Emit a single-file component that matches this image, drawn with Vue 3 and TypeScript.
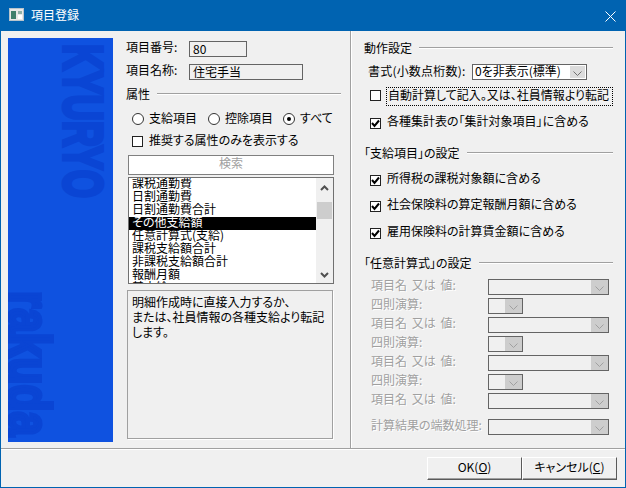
<script setup lang="ts">
const listItems: string[] = [
  '課税通勤費',
  '日割通勤費',
  '日割通勤費合計',
  'その他支給額',
  '任意計算式(支給)',
  '課税支給額合計',
  '非課税支給額合計',
  '報酬月額',
  '基本給',
]
const selectedItem = 3

const payChecks: string[] = [
  '所得税の課税対象額に含める',
  '社会保険料の算定報酬月額に含める',
  '雇用保険料の計算賃金額に含める',
]

const calcRows = [
  { label: '項目名 又は 値:', small: false },
  { label: '四則演算:', small: true },
  { label: '項目名 又は 値:', small: false },
  { label: '四則演算:', small: true },
  { label: '項目名 又は 値:', small: false },
  { label: '四則演算:', small: true },
  { label: '項目名 又は 値:', small: false },
]
</script>

<template>
  <div class="window">
    <div class="titlebar">
      <svg class="appIcon" width="16" height="14" viewBox="0 0 16 14">
        <rect x="0.5" y="0.5" width="14" height="12" fill="#e8e8e8" stroke="#b8c4cc" />
        <rect x="2" y="3" width="5" height="8" fill="#3f7f6c" />
        <rect x="9" y="3" width="4" height="3" fill="#8fb0a8" />
        <rect x="9" y="7" width="4" height="4" fill="#ffffff" />
      </svg>
      <span class="titleText">項目登録</span>
      <svg class="closeIcon" width="11" height="11" viewBox="0 0 11 11">
        <path d="M0.5 0.5L10.5 10.5M10.5 0.5L0.5 10.5" stroke="#fff" stroke-width="1" fill="none" />
      </svg>
    </div>

    <div class="content">
      <div class="leftPane">
        <div class="bluePanel">
          <svg width="105" height="404" viewBox="0 0 105 404">
            <text class="logoText" transform="translate(56,6) rotate(90)" font-size="56" textLength="154" lengthAdjust="spacingAndGlyphs">KYURYO</text>
            <text class="logoText" transform="translate(1,253) rotate(90)" font-size="60" textLength="145" lengthAdjust="spacingAndGlyphs">rakuda</text>
          </svg>
        </div>

        <div class="middle">
          <div class="fieldRow first">
            <span class="fieldLabel">項目番号:</span>
            <span class="field numberField">80</span>
          </div>
          <div class="fieldRow second">
            <span class="fieldLabel">項目名称:</span>
            <span class="field nameField">住宅手当</span>
          </div>

          <div class="legend attrLegend"><span>属性</span><i></i></div>

          <div class="radioRow">
            <label class="radioItem"><span class="radio"></span><span class="raised">支給項目</span></label>
            <label class="radioItem"><span class="radio"></span><span class="raised">控除項目</span></label>
            <label class="radioItem"><span class="radio on"></span><span class="raised">すべて</span></label>
          </div>
          <div class="recommendRow">
            <span class="check"></span><span class="raised">推奨する属性のみを表示する</span>
          </div>

          <div class="searchBtn">検索</div>

          <div class="listBox">
            <div class="listRows">
              <div v-for="(item, i) in listItems" :key="item" class="listRow" :class="{ selected: i === selectedItem }">{{ item }}</div>
            </div>
            <div class="scrollbar">
              <svg class="arrowUp" width="9" height="6" viewBox="0 0 9 6"><path d="M1 5L4.5 1.5L8 5" stroke="#505050" stroke-width="2" fill="none" /></svg>
              <div class="thumb"></div>
              <svg class="arrowDown" width="9" height="6" viewBox="0 0 9 6"><path d="M1 1L4.5 4.5L8 1" stroke="#505050" stroke-width="2" fill="none" /></svg>
            </div>
          </div>

          <div class="description">
            明細作成時に直接入力するか、<br />
            または、社員情報の各種支給より転記<br />
            します。
          </div>
        </div>
      </div>

      <div class="rightPane">
        <div class="legend"><span>動作設定</span><i></i></div>

        <div class="formatRow">
          <span class="formatLabel">書式(小数点桁数):</span>
          <div class="combo formatCombo">
            <span class="comboValue">0を非表示(標準)</span>
            <span class="comboBtn active">
              <svg width="9" height="5" viewBox="0 0 9 5"><path d="M0.5 0.5L4.5 4.5L8.5 0.5" stroke="#707070" fill="none" /></svg>
            </span>
          </div>
        </div>

        <div class="checkRow autoRow">
          <span class="check"></span>
          <span class="focusLabel">自動計算して記入。又は、社員情報より転記</span>
        </div>
        <div class="checkRow summaryRow">
          <span class="check">
            <svg width="9" height="9" viewBox="0 0 9 9"><path d="M1 4L3.5 7L8 1.5" stroke="#000" stroke-width="2" fill="none" /></svg>
          </span>
          <span class="checkText">各種集計表の「集計対象項目」に含める</span>
        </div>

        <div class="legend payLegend"><span>「支給項目」の設定</span><i></i></div>

        <div v-for="(text, i) in payChecks" :key="text" class="checkRow" :class="'pay' + i">
          <span class="check">
            <svg width="9" height="9" viewBox="0 0 9 9"><path d="M1 4L3.5 7L8 1.5" stroke="#000" stroke-width="2" fill="none" /></svg>
          </span>
          <span class="checkText">{{ text }}</span>
        </div>

        <div class="legend calcLegend"><span>「任意計算式」の設定</span><i></i></div>

        <div class="calcRows">
          <div v-for="(row, i) in calcRows" :key="i" class="calcRow">
            <span class="calcLabel">{{ row.label }}</span>
            <div class="combo disabled" :class="row.small ? 'opCombo' : 'valueCombo'">
              <span class="comboValue"></span>
              <span class="comboBtn">
                <svg width="9" height="5" viewBox="0 0 9 5"><path d="M0.5 0.5L4.5 4.5L8.5 0.5" stroke="#a0a0a0" fill="none" /></svg>
              </span>
            </div>
          </div>
        </div>
        <div class="calcRow roundRow">
          <span class="calcLabel">計算結果の端数処理:</span>
          <div class="combo disabled valueCombo">
            <span class="comboValue"></span>
            <span class="comboBtn">
              <svg width="9" height="5" viewBox="0 0 9 5"><path d="M0.5 0.5L4.5 4.5L8.5 0.5" stroke="#a0a0a0" fill="none" /></svg>
            </span>
          </div>
        </div>
      </div>
    </div>

    <div class="footer">
      <button class="dlgBtn">OK(<u>O</u>)</button>
      <button class="dlgBtn">キャンセル(<u>C</u>)</button>
    </div>
  </div>
</template>

<style scoped>
.window {
  width: 626px;
  height: 488px;
  box-sizing: border-box;
  border: 1px solid #0063b1;
  background: #f0f0f0;
  display: flex;
  flex-direction: column;
  font-family: "Noto Sans CJK JP", "Liberation Sans", sans-serif;
  font-size: 12px;
  line-height: 14px;
  color: #000;
  font-feature-settings: "palt";
  overflow: hidden;
}

.titlebar {
  height: 30px;
  flex: none;
  background: #0063b1;
  display: flex;
  align-items: center;
  color: #fff;
}

.appIcon {
  margin-left: 8px;
  margin-bottom: 2px;
}

.titleText {
  margin-left: 6px;
  padding-bottom: 2px;
}

.closeIcon {
  margin-left: auto;
  margin-right: 9px;
}

.content {
  height: 417px;
  flex: none;
  display: flex;
}

.leftPane {
  width: 349px;
  flex: none;
  display: flex;
  padding: 7px 0 0 7px;
  box-sizing: border-box;
}

.bluePanel {
  width: 105px;
  height: 404px;
  flex: none;
  background: #0f52e0;
  overflow: hidden;
  margin-right: 13px;
}

.bluePanel svg {
  display: block;
}

.logoText {
  font-family: "Liberation Sans", sans-serif;
  font-weight: 700;
  fill: #0a45d4;
  stroke: #0a45d4;
  stroke-width: 4;
}

.middle {
  width: 215px;
  display: flex;
  flex-direction: column;
}

.fieldRow {
  display: flex;
  height: 16px;
  align-items: center;
}

.fieldRow.first {
  margin-top: 3px;
}

.fieldRow.second {
  margin-top: 7px;
}

.fieldLabel {
  width: 63px;
  flex: none;
  padding-bottom: 4px;
}

.field {
  height: 16px;
  box-sizing: border-box;
  border: 1px solid #646464;
  padding-left: 3px;
  line-height: 13px;
}

.numberField {
  width: 58px;
}

.nameField {
  width: 114px;
}

.legend {
  height: 14px;
  display: flex;
  align-items: center;
  flex: none;
}

.legend i {
  flex: 1;
  height: 1px;
  margin-left: 7px;
  background: #a0a0a0;
  border-bottom: 1px solid #fff;
}

.attrLegend {
  margin-top: 7px;
}

.radioRow {
  display: flex;
  margin-top: 11px;
  padding-left: 6px;
  height: 14px;
  align-items: center;
}

.radioItem {
  width: 76px;
  flex: none;
  display: flex;
  align-items: center;
}

.radioItem:nth-child(2) {
  width: 75px;
}

.raised {
  padding-bottom: 2px;
}

.radio {
  width: 12px;
  height: 12px;
  box-sizing: border-box;
  border: 1px solid #333;
  border-radius: 50%;
  background: #fff;
  margin-right: 5px;
  flex: none;
  position: relative;
}

.radio.on::after {
  content: "";
  position: absolute;
  left: 3px;
  top: 3px;
  width: 4px;
  height: 4px;
  border-radius: 50%;
  background: #000;
}

.recommendRow {
  display: flex;
  align-items: center;
  margin-top: 8px;
  padding-left: 6px;
  height: 14px;
}

.recommendRow .check {
  margin-right: 6px;
}

.check {
  width: 11px;
  height: 11px;
  box-sizing: border-box;
  border: 1px solid #222;
  background: #fff;
  flex: none;
  display: flex;
  align-items: center;
  justify-content: center;
}

.searchBtn {
  margin-top: 7px;
  margin-left: 2px;
  width: 206px;
  height: 20px;
  box-sizing: border-box;
  border: 1px solid #808080;
  background: #fff;
  color: #a0a0a0;
  text-align: center;
  line-height: 13px;
}

.listBox {
  margin-top: 2px;
  margin-left: 2px;
  width: 206px;
  height: 107px;
  box-sizing: border-box;
  border: 1px solid #707070;
  background: #fff;
  display: flex;
  overflow: hidden;
}

.listRows {
  flex: 1;
  overflow: hidden;
}

.listRow {
  height: 13px;
  line-height: 9px;
  padding-left: 3px;
  white-space: nowrap;
}

.listRow.selected {
  background: #000;
  color: #fff;
}

.scrollbar {
  width: 17px;
  flex: none;
  background: #f0f0f0;
  position: relative;
}

.arrowUp {
  position: absolute;
  left: 4px;
  top: 7px;
}

.arrowDown {
  position: absolute;
  left: 4px;
  top: 94px;
}

.thumb {
  position: absolute;
  left: 1px;
  top: 24px;
  width: 15px;
  height: 17px;
  background: #cdcdcd;
}

.description {
  margin-top: 6px;
  margin-left: 1px;
  width: 206px;
  height: 149px;
  box-sizing: border-box;
  border: 1px solid #a0a0a0;
  box-shadow: 1px 1px 0 #fff;
  padding: 3px 4px;
  line-height: 15px;
}

.rightPane {
  flex: 1;
  border-left: 1px solid #a0a0a0;
  box-shadow: inset 1px 0 0 #fff;
  padding: 10px 12px 0 13px;
  box-sizing: border-box;
  display: flex;
  flex-direction: column;
}

.formatRow {
  display: flex;
  align-items: center;
  margin-top: 9px;
  padding-left: 4px;
  height: 16px;
}

.formatLabel {
  width: 104px;
  flex: none;
  padding-bottom: 2px;
  letter-spacing: 0.2px;
}

.combo {
  display: flex;
  height: 16px;
  box-sizing: border-box;
  border: 1px solid #646464;
}

.formatCombo {
  width: 115px;
}

.formatCombo .comboValue {
  background: #fff;
  padding-left: 2px;
}

.comboValue {
  flex: 1;
  line-height: 12px;
}

.comboBtn {
  width: 17px;
  flex: none;
  background: #cdcdcd;
  display: flex;
  align-items: center;
  justify-content: center;
  padding-top: 2px;
  box-sizing: border-box;
}

.comboBtn.active {
  background: #dcdcdc;
  border: 1px solid #fff;
}

.comboBtn svg {
  display: block;
}

.checkRow {
  display: flex;
  align-items: center;
  height: 14px;
  padding-left: 6px;
}

.checkText {
  margin-left: 6px;
  padding-bottom: 4px;
}

.autoRow {
  margin-top: 7px;
  height: 19px;
}

.autoRow .check {
  margin-bottom: 2px;
}

.focusLabel {
  margin-left: 5px;
  flex: 1;
  height: 19px;
  box-sizing: border-box;
  border: 1px dotted #000;
  padding-left: 1px;
  line-height: 14px;
  white-space: nowrap;
}

.summaryRow {
  margin-top: 10px;
}

.payLegend {
  margin-top: 16px;
}

.pay0 {
  margin-top: 13px;
}

.pay1 {
  margin-top: 12px;
}

.pay2 {
  margin-top: 13px;
}

.calcLegend {
  margin-top: 16px;
}

.calcRows {
  margin-top: 9px;
  display: flex;
  flex-direction: column;
  gap: 3px;
}

.calcRow {
  display: flex;
  align-items: center;
  height: 16px;
  padding-left: 7px;
}

.calcLabel {
  width: 117px;
  flex: none;
  color: #a0a0a0;
  text-shadow: 1px 1px 0 #fff;
  white-space: nowrap;
  word-spacing: 2px;
  padding-bottom: 5px;
}

.valueCombo {
  width: 121px;
}

.opCombo {
  width: 35px;
}

.roundRow {
  margin-top: 10px;
}

.footer {
  flex: 1;
  border-top: 1px solid #a0a0a0;
  box-shadow: inset 0 1px 0 #fff;
  display: flex;
  justify-content: flex-end;
  padding: 8px 8px 0 0;
  align-items: flex-start;
  box-sizing: border-box;
}

.dlgBtn {
  width: 95px;
  height: 23px;
  box-sizing: border-box;
  background: #f0f0f0;
  border: 1px solid;
  border-color: #fff #5a5a5a #5a5a5a #fff;
  box-shadow: inset 0 -1px 0 #a0a0a0;
  font: inherit;
  color: #000;
  padding: 0 0 3px;
}
</style>

<style>
html,
body {
  margin: 0;
  padding: 0;
  background: #f0f0f0;
}
</style>
